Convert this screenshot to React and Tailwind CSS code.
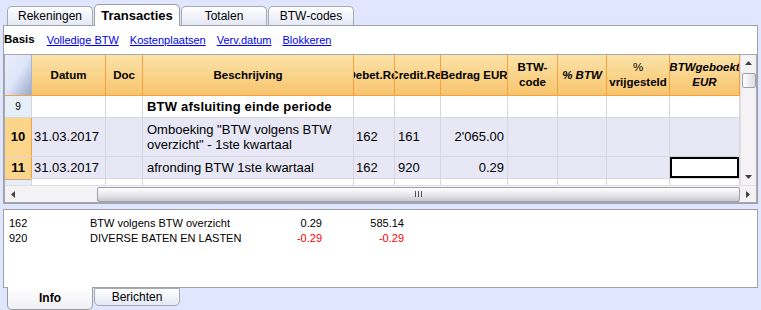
import React from 'react';

const cols = [
  { key: 'num', w: 'w-[27px]' },
  { key: 'datum', w: 'w-[74px]' },
  { key: 'doc', w: 'w-[37px]' },
  { key: 'besch', w: 'w-[211px]' },
  { key: 'debet', w: 'w-[41px]' },
  { key: 'credit', w: 'w-[46px]' },
  { key: 'bedrag', w: 'w-[67px]' },
  { key: 'code', w: 'w-[50px]' },
  { key: 'pbtw', w: 'w-[49px]' },
  { key: 'vrij', w: 'w-[63px]' },
  { key: 'geboekt', w: 'w-[70px]' },
];

const TopTab = ({ label, active }) => (
  <div
    className={
      active
        ? 'w-[86px] h-[22px] -mb-px z-10 flex items-center justify-center rounded-t-[5px] border border-b-0 border-[#9c9ca4] bg-white font-bold text-[13px]'
        : 'w-[86px] h-[19px] flex items-center justify-center rounded-t-[5px] border border-b-0 border-[#a8a8b0] bg-gradient-to-b from-white to-[#e4e8f6] text-[12px]'
    }
  >
    {label}
  </div>
);

const HeadCell = ({ w, children, className = '' }) => (
  <div
    className={`${w} shrink-0 h-full border-r border-[#f5a041] flex items-center justify-center overflow-hidden whitespace-nowrap text-center leading-[15px] font-bold text-[11.5px] ${className}`}
  >
    {children}
  </div>
);

const Cell = ({ w, children, className = '' }) => (
  <div className={`${w} shrink-0 h-full border-r border-[#d6d6dc] flex items-center overflow-hidden ${className}`}>
    {children}
  </div>
);

const App = () => {
  return (
    <div
      className="w-[761px] h-[310px] bg-[#dfe6fe] flex flex-col text-black overflow-hidden"
      style={{ fontFamily: '"Liberation Sans", Arial, sans-serif' }}
    >
      {/* top tabs */}
      <div className="h-[25px] flex items-end pl-[7px] gap-px">
        <TopTab label="Rekeningen" />
        <TopTab label="Transacties" active />
        <TopTab label="Totalen" />
        <TopTab label="BTW-codes" />
      </div>

      {/* upper panel */}
      <div className="mx-[3px] h-[179px] border border-[#a0a0a8] bg-white flex flex-col">
        <div className="h-[28px] flex items-center gap-[11px] text-[11px]">
          <span className="font-bold text-[11.5px] mr-[1px]">Basis</span>
          <span className="text-[#0000ee] underline">Volledige BTW</span>
          <span className="text-[#0000ee] underline">Kostenplaatsen</span>
          <span className="text-[#0000ee] underline">Verv.datum</span>
          <span className="text-[#0000ee] underline">Blokkeren</span>
        </div>

        <div className="flex-1 border border-[#a8a8b0] flex flex-col overflow-hidden">
          <div className="flex flex-1 min-h-0">
            <div className="w-[735px] flex flex-col">
              {/* header */}
              <div className="h-[41px] flex border-b border-[#f5a041] bg-gradient-to-b from-[#fbe3a8] to-[#f7c46c]">
                <div className="w-[27px] shrink-0 h-full border-r border-[#a8b4d0] bg-gradient-to-br from-[#e8eefc] via-[#dfe6fa] to-[#9aa8c8]" />
                <HeadCell w="w-[74px]">Datum</HeadCell>
                <HeadCell w="w-[37px]">Doc</HeadCell>
                <HeadCell w="w-[211px]">Beschrijving</HeadCell>
                <HeadCell w="w-[41px]">Debet.Rel</HeadCell>
                <HeadCell w="w-[46px]">Credit.Rel</HeadCell>
                <HeadCell w="w-[67px]">Bedrag EUR</HeadCell>
                <HeadCell w="w-[50px]">
                  <span>BTW-<br />code</span>
                </HeadCell>
                <HeadCell w="w-[49px]" className="italic">% BTW</HeadCell>
                <HeadCell w="w-[63px]">
                  <span><span className="font-normal">%</span><br />vrijgesteld</span>
                </HeadCell>
                <HeadCell w="w-[70px]" className="italic">
                  <span>BTWgeboekt<br />EUR</span>
                </HeadCell>
              </div>

              {/* row 9 */}
              <div className="h-[22px] flex border-b border-[#d6d6dc] bg-white whitespace-nowrap">
                <Cell w="w-[27px]" className="justify-center bg-[#e6eef8] text-[10px]">9</Cell>
                <Cell w="w-[74px]" />
                <Cell w="w-[37px]" />
                <Cell w="w-[211px]" className="pl-[4px] font-bold text-[13px] tracking-[0.2px]">BTW afsluiting einde periode</Cell>
                <Cell w="w-[41px]" />
                <Cell w="w-[46px]" />
                <Cell w="w-[67px]" />
                <Cell w="w-[50px]" />
                <Cell w="w-[49px]" />
                <Cell w="w-[63px]" />
                <Cell w="w-[70px]" />
              </div>

              {/* row 10 */}
              <div className="h-[39px] flex border-b border-[#d6d6dc] bg-[#e7e7f6] text-[13px] whitespace-nowrap">
                <Cell w="w-[27px]" className="justify-center bg-[#fcd58a] border-[#f5a041] font-bold">10</Cell>
                <Cell w="w-[74px]" className="pl-[2px]">31.03.2017</Cell>
                <Cell w="w-[37px]" />
                <Cell w="w-[211px]" className="pl-[4px] pr-[8px]">
                  <span className="whitespace-normal leading-[15px]">
                    Omboeking "BTW volgens BTW overzicht" - 1ste kwartaal
                  </span>
                </Cell>
                <Cell w="w-[41px]" className="pl-[2px]">162</Cell>
                <Cell w="w-[46px]" className="pl-[3px]">161</Cell>
                <Cell w="w-[67px]" className="justify-end pr-[3px]">2'065.00</Cell>
                <Cell w="w-[50px]" />
                <Cell w="w-[49px]" />
                <Cell w="w-[63px]" />
                <Cell w="w-[70px]" />
              </div>

              {/* row 11 */}
              <div className="h-[22px] flex border-b border-[#d6d6dc] bg-[#e7e7f6] text-[13px] whitespace-nowrap">
                <Cell w="w-[27px]" className="justify-center bg-[#fcd58a] border-[#f5a041] font-bold">11</Cell>
                <Cell w="w-[74px]" className="pl-[2px]">31.03.2017</Cell>
                <Cell w="w-[37px]" />
                <Cell w="w-[211px]" className="pl-[4px]">afronding BTW 1ste kwartaal</Cell>
                <Cell w="w-[41px]" className="pl-[2px]">162</Cell>
                <Cell w="w-[46px]" className="pl-[3px]">920</Cell>
                <Cell w="w-[67px]" className="justify-end pr-[3px]">0.29</Cell>
                <Cell w="w-[50px]" />
                <Cell w="w-[49px]" />
                <Cell w="w-[63px]" />
                <Cell w="w-[70px]">
                  <div className="w-[69px] h-[21px] border-2 border-black bg-white" />
                </Cell>
              </div>

              {/* partial row */}
              <div className="flex-1 flex bg-white">
                {cols.map((c) => (
                  <div
                    key={c.key}
                    className={`${c.w} shrink-0 h-full border-r border-[#d6d6dc] ${c.key === 'num' ? 'bg-[#e6eef8] border-t border-t-[#f5a041]' : ''}`}
                  />
                ))}
              </div>
            </div>

            {/* vertical scrollbar */}
            <div className="w-[16px] shrink-0 bg-[#f4f2f4] border-l border-[#e0e0e4] flex flex-col items-center">
              <div className="h-[16px] flex items-center justify-center">
                <svg width="7" height="4" viewBox="0 0 7 4"><path d="M0 4 L3.5 0 L7 4 Z" fill="#404040" /></svg>
              </div>
              <div className="w-[14px] h-[15px] mt-[2px] rounded-[2px] border border-[#a0a0a8] bg-gradient-to-r from-white to-[#dcdce4]" />
              <div className="flex-1" />
              <div className="h-[16px] flex items-center justify-center">
                <svg width="7" height="4" viewBox="0 0 7 4"><path d="M0 0 L3.5 4 L7 0 Z" fill="#404040" /></svg>
              </div>
            </div>
          </div>

          {/* horizontal scrollbar */}
          <div className="h-[17px] shrink-0 flex items-center bg-[#f4f2f4] border-t border-[#e0e0e4]">
            <div className="w-[16px] flex items-center justify-center">
              <svg width="4" height="7" viewBox="0 0 4 7"><path d="M4 0 L0 3.5 L4 7 Z" fill="#404040" /></svg>
            </div>
            <div className="w-[77px]" />
            <div className="w-[647px] h-[15px] rounded-[2px] border border-[#a0a0a8] bg-gradient-to-b from-white via-[#e8e8ee] to-[#c8c8d0] flex items-center justify-center">
              <svg width="8" height="6" viewBox="0 0 8 6">
                <path d="M0.5 0 V6 M3.5 0 V6 M6.5 0 V6" stroke="#505058" strokeWidth="1" />
              </svg>
            </div>
            <div className="w-[16px] flex items-center justify-center">
              <svg width="4" height="7" viewBox="0 0 4 7"><path d="M0 0 L4 3.5 L0 7 Z" fill="#404040" /></svg>
            </div>
          </div>
        </div>
      </div>

      {/* lower panel */}
      <div className="mx-[3px] mt-[5px] h-[79px] border border-[#a0a0a8] bg-white pt-[6px] text-[11px] leading-[15px] whitespace-nowrap">
        <div className="flex">
          <span className="w-[86px] pl-[5px]">162</span>
          <span className="w-[150px]">BTW volgens BTW overzicht</span>
          <span className="w-[82px] text-right">0.29</span>
          <span className="w-[82px] text-right">585.14</span>
        </div>
        <div className="flex">
          <span className="w-[86px] pl-[5px]">920</span>
          <span className="w-[150px]">DIVERSE BATEN EN LASTEN</span>
          <span className="w-[82px] text-right text-[#ff0000]">-0.29</span>
          <span className="w-[82px] text-right text-[#ff0000]">-0.29</span>
        </div>
      </div>

      {/* bottom tabs */}
      <div className="flex pl-[7px] gap-px -mt-px">
        <div className="w-[86px] h-[23px] z-10 flex items-center justify-center rounded-b-[5px] border border-t-0 border-[#9c9ca4] bg-gradient-to-b from-white to-[#f0f0f4] font-bold text-[12px]">
          Info
        </div>
        <div className="w-[86px] h-[18px] mt-px flex items-center justify-center rounded-b-[5px] border border-[#a8a8b0] bg-gradient-to-b from-white to-[#e4e8f6] text-[12px]">
          Berichten
        </div>
      </div>
    </div>
  );
};

export default App;
